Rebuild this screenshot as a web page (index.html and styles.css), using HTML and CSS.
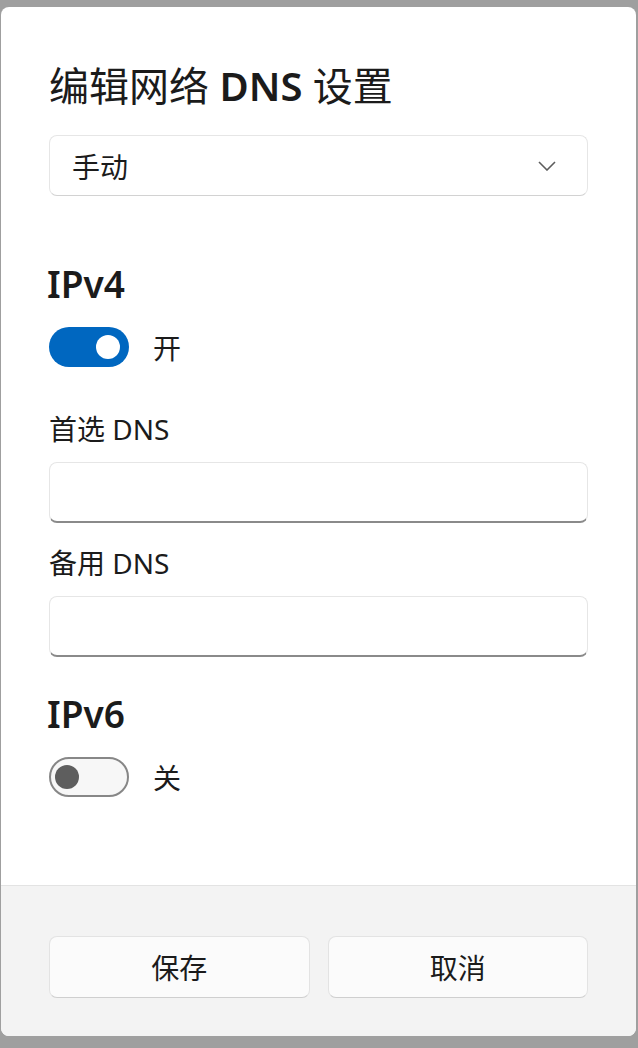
FILE: index.html
```html
<!DOCTYPE html>
<html lang="zh-CN">
<head>
    <meta charset="UTF-8">
    <meta name="viewport" content="width=device-width, initial-scale=1.0">
    <title>编辑网络 DNS 设置</title>
    <link rel="stylesheet" href="styles.css">
</head>
<body>

<div class="dialog">
    <div class="dialog-body">
        <h1 class="title">编辑网络 <span class="latin">DNS</span> 设置</h1>

        <div class="select">
            <span>手动</span>
            <svg class="chevron" width="18" height="10" viewBox="0 0 18 10">
                <polyline points="1,1 9,9 17,1" fill="none" stroke="#5d5d5d" stroke-width="1.6"/>
            </svg>
        </div>

        <h2 class="section">IPv4</h2>
        <div class="toggle-row">
            <div class="toggle on"><div class="knob"></div></div>
            <span class="toggle-label">开</span>
        </div>

        <label class="field-label" for="dns1">首选 DNS</label>
        <input class="field" type="text" id="dns1">

        <label class="field-label second" for="dns2">备用 DNS</label>
        <input class="field" type="text" id="dns2">

        <h2 class="section ipv6">IPv6</h2>
        <div class="toggle-row">
            <div class="toggle off"><div class="knob"></div></div>
            <span class="toggle-label">关</span>
        </div>
    </div>

    <div class="dialog-footer">
        <button class="btn">保存</button>
        <button class="btn">取消</button>
    </div>
</div>

</body>
</html>
```

FILE: styles.css
```css
html, body {
    margin: 0;
    height: 1048px;
    overflow: hidden;
}
body {
    background: #9f9f9f;
    font-family: "Noto Sans", "Noto Sans CJK SC", sans-serif;
    color: #1b1b1b;
}
.dialog {
    margin: 7px 2px 12px 1px;
    height: 1029px;
    background: #ffffff;
    border-radius: 8px;
    display: flex;
    flex-direction: column;
    overflow: hidden;
}
.dialog-body {
    padding: 57px 48px 88px 48px;
    display: flex;
    flex-direction: column;
}
.title {
    margin: 0;
    font-size: 40px;
    font-weight: 400;
    line-height: 44px;
}
.title .latin {
    font-weight: 600;
}
.select {
    margin-top: 27px;
    height: 59px;
    border: 1px solid #e6e6e6;
    border-bottom-color: #d2d2d2;
    border-radius: 8px;
    background: #ffffff;
    display: flex;
    align-items: center;
    justify-content: space-between;
    padding: 0 31px 0 22px;
    font-size: 28px;
}
.chevron {
    display: block;
}
.section {
    margin: 66px 0 0 -2px;
    font-size: 37px;
    font-weight: 600;
    line-height: 44px;
}
.section.ipv6 {
    margin-top: 35px;
}
.toggle-row {
    margin-top: 21px;
    display: flex;
    align-items: center;
    gap: 24px;
    height: 40px;
}
.toggle {
    width: 80px;
    height: 40px;
    border-radius: 20px;
    box-sizing: border-box;
    display: flex;
    align-items: center;
}
.toggle.on {
    background: #0067c0;
    justify-content: flex-end;
    padding-right: 9px;
}
.toggle.off {
    background: #f7f7f7;
    border: 2px solid #878787;
    padding-left: 4px;
}
.knob {
    width: 24px;
    height: 24px;
    border-radius: 50%;
}
.toggle.on .knob {
    background: #ffffff;
}
.toggle.off .knob {
    background: #5e5e5e;
}
.toggle-label {
    font-size: 28px;
}
.field-label {
    margin-top: 46px;
    font-size: 28px;
    line-height: 32px;
}
.field-label.second {
    margin-top: 24px;
}
.field {
    margin: 17px 0 0 0;
    height: 61px;
    box-sizing: border-box;
    border: 1px solid #e6e6e6;
    border-bottom: 2px solid #8a8a8a;
    border-radius: 8px;
    background: #ffffff;
    font-size: 26px;
    padding: 0 16px;
    outline: none;
}
.dialog-footer {
    flex: 1;
    background: #f3f3f3;
    border-top: 1px solid #e3e3e3;
    padding: 50px 48px 0 48px;
    display: flex;
    gap: 18px;
    align-items: flex-start;
}
.btn {
    flex: 1;
    height: 62px;
    border: 1px solid #e3e3e3;
    border-bottom-color: #cfcfcf;
    border-radius: 8px;
    background: #fbfbfb;
    font-family: inherit;
    font-size: 28px;
    color: #1b1b1b;
}
```
